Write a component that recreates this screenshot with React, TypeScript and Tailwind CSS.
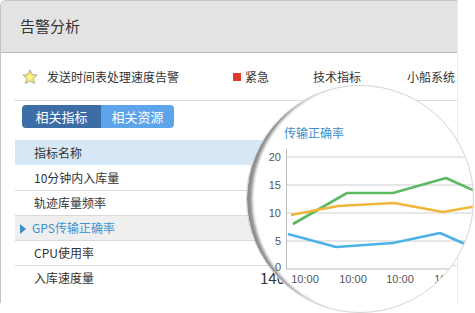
const rows = [
  { name: "10分钟内入库量" },
  { name: "轨迹库量频率" },
  { name: "GPS传输正确率", active: true },
  { name: "CPU使用率" },
  { name: "入库速度量", value: "140" },
];

const green = "46,138 100,107 146,107 199,92 230,106";
const yellow = "44,129 91,120 147,117 196,126 230,120";
const blue = "41,148 89,161 146,157 193,147 218,158 232,170";

function Star() {
  return (
    <svg width="16" height="16" viewBox="0 0 16 16">
      <defs>
        <radialGradient id="sg" cx="50%" cy="55%" r="55%">
          <stop offset="0%" stopColor="#fff8a0" />
          <stop offset="100%" stopColor="#f2d91c" />
        </radialGradient>
      </defs>
      <polygon
        points="8,0.8 10.1,5.6 15.2,6 11.3,9.4 12.5,14.6 8,11.9 3.5,14.6 4.7,9.4 0.8,6 5.9,5.6"
        fill="url(#sg)"
        stroke="#a8a8a8"
        strokeWidth="0.9"
        strokeLinejoin="round"
      />
    </svg>
  );
}

function Magnifier() {
  return (
    <div className="absolute left-[246px] top-[85px] w-[228px] h-[228px] rounded-full overflow-hidden bg-white border border-[#d4d4d4] shadow-[inset_10px_0_3px_-5px_rgba(0,0,0,0.45)]">
      <div className="absolute left-[37px] top-[38px] text-[12px] leading-[18px] text-[#3b8ec9]">传输正确率</div>
      <svg width="228" height="228" className="absolute left-0 top-0">
        {[71, 99, 127, 155].map((y) => (
          <line key={y} x1="39" y1={y} x2="228" y2={y} stroke="#cfcfcf" strokeWidth="1" />
        ))}
        <line x1="39.5" y1="63" x2="39.5" y2="183" stroke="#bdbdbd" strokeWidth="1" />
        <line x1="39" y1="183" x2="228" y2="183" stroke="#bdbdbd" strokeWidth="1" />
        {[
          ["20", 71],
          ["15", 99],
          ["10", 127],
          ["5", 155],
          ["0", 181],
        ].map(([t, y]) => (
          <text key={t} x="34" y={Number(y) + 4} textAnchor="end" fontSize="11" fill="#555" fontFamily="'Liberation Sans', sans-serif">
            {t}
          </text>
        ))}
        {[58, 106, 153, 201].map((x) => (
          <text key={x} x={x} y="197" textAnchor="middle" fontSize="11" fill="#555" fontFamily="'Liberation Sans', sans-serif">
            10:00
          </text>
        ))}
        <polyline points={green} fill="none" stroke="#5dba63" strokeWidth="2.6" strokeLinejoin="round" />
        <polyline points={yellow} fill="none" stroke="#f0b63a" strokeWidth="2.6" strokeLinejoin="round" />
        <polyline points={blue} fill="none" stroke="#4cb2e8" strokeWidth="2.6" strokeLinejoin="round" />
      </svg>
    </div>
  );
}

export default function App() {
  return (
    <div className="relative w-[475px] h-[313px] bg-white overflow-hidden font-['Noto_Sans_CJK_SC',sans-serif] text-[#333]">
      <div className="w-[458px] h-[303px] border-l border-t border-r border-[#c4c4c4] border-r-[#ececec] rounded-tl-[6px] flex flex-col">
        <div className="h-[52px] shrink-0 bg-[#e3e3e3] border-b border-[#bcbcbc] rounded-tl-[5px] flex items-center pl-[19px] text-[15px] text-[#333]">
          告警分析
        </div>

        <div className="pl-[13px] flex flex-col">
          <div className="h-[48px] border-b border-[#dcdcdc] flex items-center text-[12px] leading-[16px]">
            <div className="w-[219px] pl-[8px] flex items-center gap-[9px]">
              <Star />
              <span>发送时间表处理速度告警</span>
            </div>
            <div className="w-[80px] flex items-center gap-[4px]">
              <span className="w-[8px] h-[8px] bg-[#e03a2f]" />
              <span>紧急</span>
            </div>
            <div className="w-[94px]">技术指标</div>
            <div className="whitespace-nowrap">小船系统</div>
          </div>

          <div className="ml-[8px] mt-[4px] flex w-fit rounded-[4px] overflow-hidden text-[13px] leading-[23px] text-white">
            <div className="w-[79px] text-center bg-[#3d6da7]">相关指标</div>
            <div className="w-[73px] text-center bg-[#5ea4ea]">相关资源</div>
          </div>

          <div className="mt-[12px] ml-[1px] flex flex-col text-[12px]">
            <div className="h-[25px] bg-[#d6e8f5] flex items-center pl-[19px]">
              <span>指标名称</span>
            </div>
            {rows.map((r, i) => (
              <div
                key={r.name}
                className={
                  "h-[25px] flex items-center relative " +
                  (i > 0 ? "border-t border-[#d9d9d9] " : "") +
                  (r.active ? "bg-[#efefef] text-[#3a93d0] pl-[17px]" : "pl-[19px]")
                }
              >
                {r.active && (
                  <span className="absolute left-[5px] top-[8px] w-0 h-0 border-y-[5px] border-y-transparent border-l-[6px] border-l-[#3d8fcc]" />
                )}
                <span className={r.active ? "w-[228px]" : "w-[226px]"}>{r.name}</span>
                {r.value && <span className="text-[#333] text-[15px]">{r.value}</span>}
              </div>
            ))}
          </div>
        </div>
      </div>
      <Magnifier />
    </div>
  );
}
